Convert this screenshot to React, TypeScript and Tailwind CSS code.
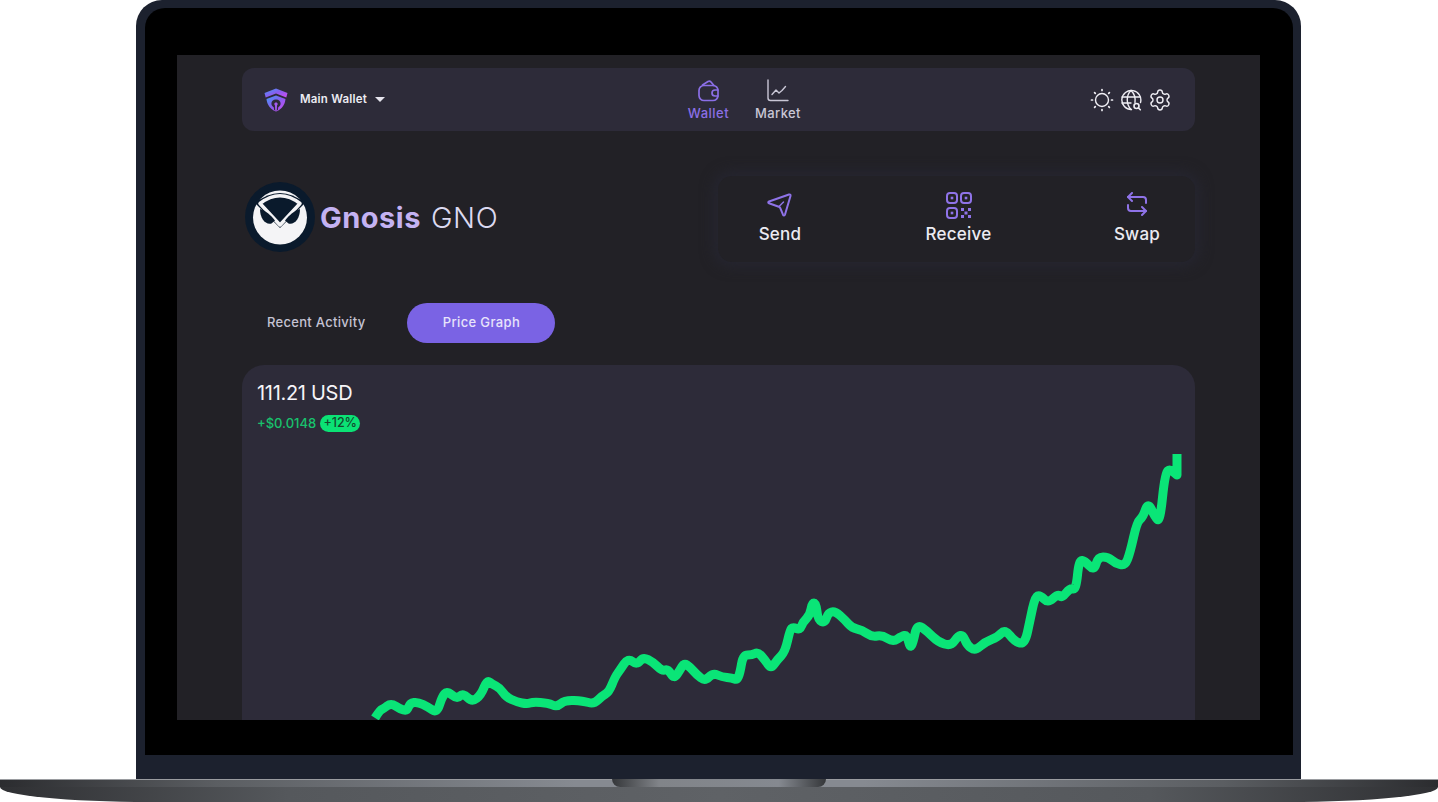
import { Settings } from "lucide-react";

const chartPoints =
  "375,718 380,710 383,709 391,703 400,709 407,711 410,703 418,702 428,707 437,713 442,697 447,691 457,699 463,693 472,702 481,695 487,680 492,684 500,688 506,697 517,702 527,704 533,702 548,703 557,707 565,700 583,701 594,704 602,696 609,692 615,677 620,670 628,658 637,665 643,657 653,662 662,671 668,669 674,679 680,670 684,663 690,667 697,675 705,681 713,673 722,677 732,678 737,680 740,673 743,655 752,655 758,652 765,660 771,669 777,660 785,652 790,630 793,627 800,630 803,622 810,615 812,603 816,603 818,620 825,623 828,613 835,611 845,620 852,628 862,630 872,637 882,635 893,642 902,636 907,635 910,648 913,643 917,624 927,631 938,642 951,646 958,636 963,635 967,645 975,651 985,642 998,637 1005,629 1015,642 1025,644 1030,620 1035,597 1040,595 1048,603 1058,594 1062,598 1070,588 1076,590 1079,560 1085,561 1094,571 1098,557 1108,557 1115,563 1125,566 1130,553 1137,522 1143,517 1148,502 1155,517 1160,522 1165,473 1170,469 1177,475 1177,454";

// rounds the traced points off through their midpoints
function smoothPath(raw: string) {
  const pts = raw.split(" ").map((p) => p.split(",").map(Number));
  let d = `M${pts[0][0]} ${pts[0][1]}`;
  for (let i = 1; i < pts.length - 2; i++) {
    const mx = (pts[i][0] + pts[i + 1][0]) / 2;
    const my = (pts[i][1] + pts[i + 1][1]) / 2;
    d += ` Q${pts[i][0]} ${pts[i][1]} ${mx} ${my}`;
  }
  const a = pts[pts.length - 2];
  const b = pts[pts.length - 1];
  return `${d} L${a[0]} ${a[1]} L${b[0]} ${b[1]}`;
}

function ShieldLogo() {
  return (
    <svg width="24" height="24" viewBox="0 0 24 24" className="shrink-0">
      <defs>
        <linearGradient id="shield" x1="0" y1="0" x2="1" y2="1">
          <stop offset="0" stopColor="#3f9cf5" />
          <stop offset="0.5" stopColor="#8a5cf0" />
          <stop offset="1" stopColor="#d04cf0" />
        </linearGradient>
      </defs>
      <path d="M12 .5 23.500 5l-1.200 4.600L12 5.600 1.700 9.600.5 5z" fill="url(#shield)" />
      <path d="M12 7.500 21.500 11c-.6 6-4 10.500-9.500 12.500C6.500 21.500 3.100 17 2.500 11z" fill="url(#shield)" />
      <path d="M12 11.500c3 0 4.600 2 4.600 4.200 0 1.500-1 2.700-2.300 3.500l-.5 3h-3.600l-.5-3c-1.300-.8-2.300-2-2.300-3.500 0-2.200 1.600-4.200 4.600-4.200z" fill="#2d2b39" />
      <path d="M12 14.500c1 0 1.700.7 1.700 1.600 0 .6-.3 1-.7 1.400l-.2 4.500h-1.600l-.2-4.500c-.4-.4-.7-.8-.7-1.400 0-.9.700-1.600 1.700-1.600z" fill="#a45cf0" />
    </svg>
  );
}

function OwlLogo() {
  return (
    <svg width="70" height="70" viewBox="0 0 70 70" className="shrink-0">
      <circle cx="35" cy="35" r="35" fill="#0a1a2c" />
      <circle cx="35" cy="35.500" r="27" fill="#f4f4f6" />
      <path d="M10 21Q35 1 60 21L35 46z" fill="#0a1a2c" />
      <path d="M15 21.500Q35 6 55 21.500L35 43z" fill="#0a1a2c" stroke="#f4f4f6" strokeWidth="3.500" strokeLinejoin="round" />
      <path d="M15 27C21 29 26 33 30 38.500L26.500 41.500C20 43 15 36 15 27z" fill="#0a1a2c" />
      <path d="M55 27C49 29 44 33 40 38.500L43.500 41.500C50 43 55 36 55 27z" fill="#0a1a2c" />
    </svg>
  );
}

function WalletIcon() {
  return (
    <svg width="24" height="24" viewBox="0 0 24 24" fill="none" stroke="#8b6fe6" strokeWidth="1.700" strokeLinecap="round" strokeLinejoin="round">
      <path d="M5.500 6 11 2.500c1-.6 2.200-.4 3 .5L17 6.500" />
      <rect x="2" y="6.500" width="19" height="15" rx="5" />
      <path d="M21 11h-3a3 3 0 0 0 0 6h3" />
    </svg>
  );
}

function MarketIcon() {
  return (
    <svg width="24" height="24" viewBox="0 0 24 24" fill="none" stroke="#c9c7d6" strokeWidth="1.400" strokeLinecap="round" strokeLinejoin="round">
      <path d="M2 1v18c0 1.500 1 2.500 2.500 2.500H22" />
      <path d="M6 15.500 10 11l3 3 3-2.500 3.500-4" />
    </svg>
  );
}

function SunIcon() {
  return (
    <svg width="24" height="24" viewBox="0 0 24 24" fill="none" stroke="#f0eff5" strokeWidth="1.400" strokeLinecap="round">
      <circle cx="12" cy="12" r="6.500" />
      <path d="M12 1.500v1M12 21.500v1M1.500 12h1M21.500 12h1M4.600 4.600l.7.7M18.700 18.700l.7.7M4.600 19.400l.7-.7M18.700 5.300l.7-.7" strokeWidth="1.700" />
    </svg>
  );
}

function GlobeSearchIcon() {
  return (
    <svg width="22" height="22" viewBox="0 0 22 22" fill="none" stroke="#f0eff5" strokeWidth="1.400" strokeLinecap="round">
      <path d="M11.500 20.500a9.500 9.500 0 1 1 9-7" />
      <path d="M11 1.500c-5 4.500-5 14 0 19M11 1.500c3.500 3.200 4.500 8 4 12" />
      <path d="M2 8h18M2 14h9" />
      <circle cx="16.500" cy="17" r="2.500" strokeWidth="1.600" />
      <path d="m18.500 19 1.800 1.800" strokeWidth="1.600" />
    </svg>
  );
}

function SendIcon() {
  return (
    <svg width="26" height="26" viewBox="0 0 26 26" fill="none" stroke="#8f73e8" strokeWidth="2" strokeLinejoin="round" strokeLinecap="round">
      <path d="M2 9.500 22 2.500c1.200-.4 1.800.3 1.500 1.500L18 22.500c-.4 1.200-1.500 1.200-2 .2l-2.700-6.500c-.3-.7-.8-1.200-1.500-1.500L2 11.300c-1-.4-1-1.400 0-1.800z" />
      <path d="m12 14.500 4.500-4.500" strokeWidth="1.400" />
    </svg>
  );
}

function QrIcon() {
  return (
    <svg width="26" height="28" viewBox="0 0 26 28" fill="none" stroke="#8f73e8" strokeWidth="2">
      <rect x="1" y="1" width="10" height="10" rx="3" />
      <rect x="15" y="1" width="10" height="10" rx="3" />
      <rect x="1" y="16" width="10" height="10" rx="3" />
      <rect x="4.700" y="4.700" width="2.600" height="2.600" fill="#8f73e8" stroke="none" />
      <rect x="18.700" y="4.700" width="2.600" height="2.600" fill="#8f73e8" stroke="none" />
      <rect x="4.700" y="19.700" width="2.600" height="2.600" fill="#8f73e8" stroke="none" />
      <g fill="#8f73e8" stroke="none">
        <rect x="15" y="16" width="3" height="3" />
        <rect x="22" y="16" width="3" height="3" />
        <rect x="18.500" y="19.500" width="3" height="3" />
        <rect x="15" y="23" width="3" height="3" />
        <rect x="22" y="23" width="3" height="3" />
      </g>
    </svg>
  );
}

function SwapIcon() {
  return (
    <svg width="24" height="24" viewBox="0 0 24 24" fill="none" stroke="#8f73e8" strokeWidth="2" strokeLinecap="round" strokeLinejoin="round">
      <path d="M7 1 3 5l4 4" />
      <path d="M3 5h15c2 0 3 1 3 3v3" />
      <path d="m17 23 4-4-4-4" />
      <path d="M21 19H6c-2 0-3-1-3-3v-3" />
    </svg>
  );
}

function ActionButton({ icon, label }: { icon: React.ReactNode; label: string }) {
  return (
    <div className="flex w-[70px] flex-col items-center">
      <div className="flex h-[28px] items-start">{icon}</div>
      <span className="mt-[2px] text-[17px] leading-[24px] font-medium tracking-[0.25px] text-[#ecebf2]">{label}</span>
    </div>
  );
}

function Screen() {
  return (
    <div className="flex h-[665px] w-[1083px] flex-col overflow-hidden bg-[#222126] pt-[13px] pl-[65px] pr-[65px]">
      <div className="flex h-[63px] shrink-0 items-center rounded-[12px] bg-[#2d2b39] pl-[22px] pr-[23px]">
        <div className="flex w-[424px] items-center">
          <ShieldLogo />
          <span className="mt-[1px] ml-[12px] text-[11.500px] font-semibold tracking-[0.2px] text-[#ecebf2]">Main Wallet</span>
          <span className="ml-[8px] h-0 w-0 border-x-[5px] border-t-[5px] border-x-transparent border-t-[#e6e5ee]" />
        </div>
        <div className="mt-[2px] flex items-center gap-[26px]">
          <div className="flex w-[41px] flex-col items-center">
            <WalletIcon />
            <span className="mt-[1px] text-[13px] leading-[18px] font-medium tracking-[0.5px] text-[#8b6fe6]">Wallet</span>
          </div>
          <div className="flex w-[46px] flex-col items-center">
            <MarketIcon />
            <span className="mt-[1px] text-[13px] leading-[18px] font-medium tracking-[0.4px] text-[#c9c7d6]">Market</span>
          </div>
        </div>
        <div className="ml-auto flex items-center gap-[6px] text-[#f0eff5]">
          <SunIcon />
          <GlobeSearchIcon />
          <Settings size={24} strokeWidth={1.400} />
        </div>
      </div>

      <div className="mt-[45px] flex h-[86px] shrink-0 items-center justify-between">
        <div className="flex items-center pb-[4px] pl-[3px]">
          <OwlLogo />
          <span className="mt-[2px] ml-[5px] text-[29px] font-bold tracking-[0.5px] text-[#c4b2f2]">Gnosis</span>
          <span className="mt-[2px] ml-[10px] text-[29px] font-light tracking-[0.6px] text-[#dcdaf0]">GNO</span>
        </div>
        <div className="flex h-[86px] w-[477px] items-center justify-between rounded-[14px] bg-[#222126] pl-[27px] pr-[23px] shadow-[0_0_14px_4px_#262631]">
          <ActionButton icon={<SendIcon />} label="Send" />
          <ActionButton icon={<QrIcon />} label="Receive" />
          <ActionButton icon={<SwapIcon />} label="Swap" />
        </div>
      </div>

      <div className="mt-[41px] flex h-[40px] shrink-0 items-center pl-[25px]">
        <span className="text-[13px] font-medium tracking-[0.3px] text-[#c5c3d3]">Recent Activity</span>
        <span className="ml-[42px] flex h-[40px] w-[148px] items-center justify-center rounded-full bg-[#7a63e4] text-[13px] font-medium tracking-[0.35px] text-[#e8e4fb]">
          Price Graph
        </span>
      </div>

      <div className="relative mt-[22px] h-[355px] shrink-0 overflow-hidden rounded-t-[22px] bg-[#2d2b39]">
        <div className="pt-[14px] pl-[15px]">
          <div className="text-[20px] leading-[28px] tracking-[-0.3px] text-[#f5f4f8]">111.21 USD</div>
          <div className="mt-[7px] flex items-center">
            <span className="text-[13px] leading-[18px] font-medium text-[#18c26d]">+$0.0148</span>
            <span className="ml-[4px] flex h-[17px] w-[40px] items-center justify-center rounded-full bg-[#0be275] text-[12.500px] font-medium text-[#14482f]">
              +12%
            </span>
          </div>
        </div>
        <svg className="absolute inset-0" width="953" height="355" viewBox="242 365 953 355" fill="none">
          <path d={smoothPath(chartPoints)} stroke="#0ae577" strokeWidth="9" strokeLinejoin="round" />
        </svg>
      </div>
    </div>
  );
}

export default function App() {
  return (
    <div className="h-[802px] w-[1438px] overflow-hidden bg-white font-['Inter',sans-serif]">
      <div className="ml-[136px] h-[779px] w-[1165px] rounded-t-[26px] bg-[#1c212e] pt-[8px] pr-[8px] pl-[9px]">
        <div className="h-[747px] rounded-t-[20px] bg-black pt-[47px] pl-[32px]">
          <Screen />
        </div>
      </div>
      <div className="relative h-[8px] border-t border-[#9a9ca0] bg-[linear-gradient(to_right,#2b2c2f,#5b5e62_15%,#868a91_40%,#868a91_60%,#5b5e62_85%,#2b2c2f)]">
        <div className="absolute -top-px left-[612px] h-[8px] w-[214px] rounded-b-[8px] bg-[linear-gradient(to_right,#35373a,#818489_22%,#858990_78%,#35373a)]" />
      </div>
      <div className="h-[15px] rounded-b-[150px_15px] bg-[linear-gradient(to_right,#2f3033,#55585c_20%,#5f6266_50%,#55585c_80%,#2f3033)]" />
    </div>
  );
}
